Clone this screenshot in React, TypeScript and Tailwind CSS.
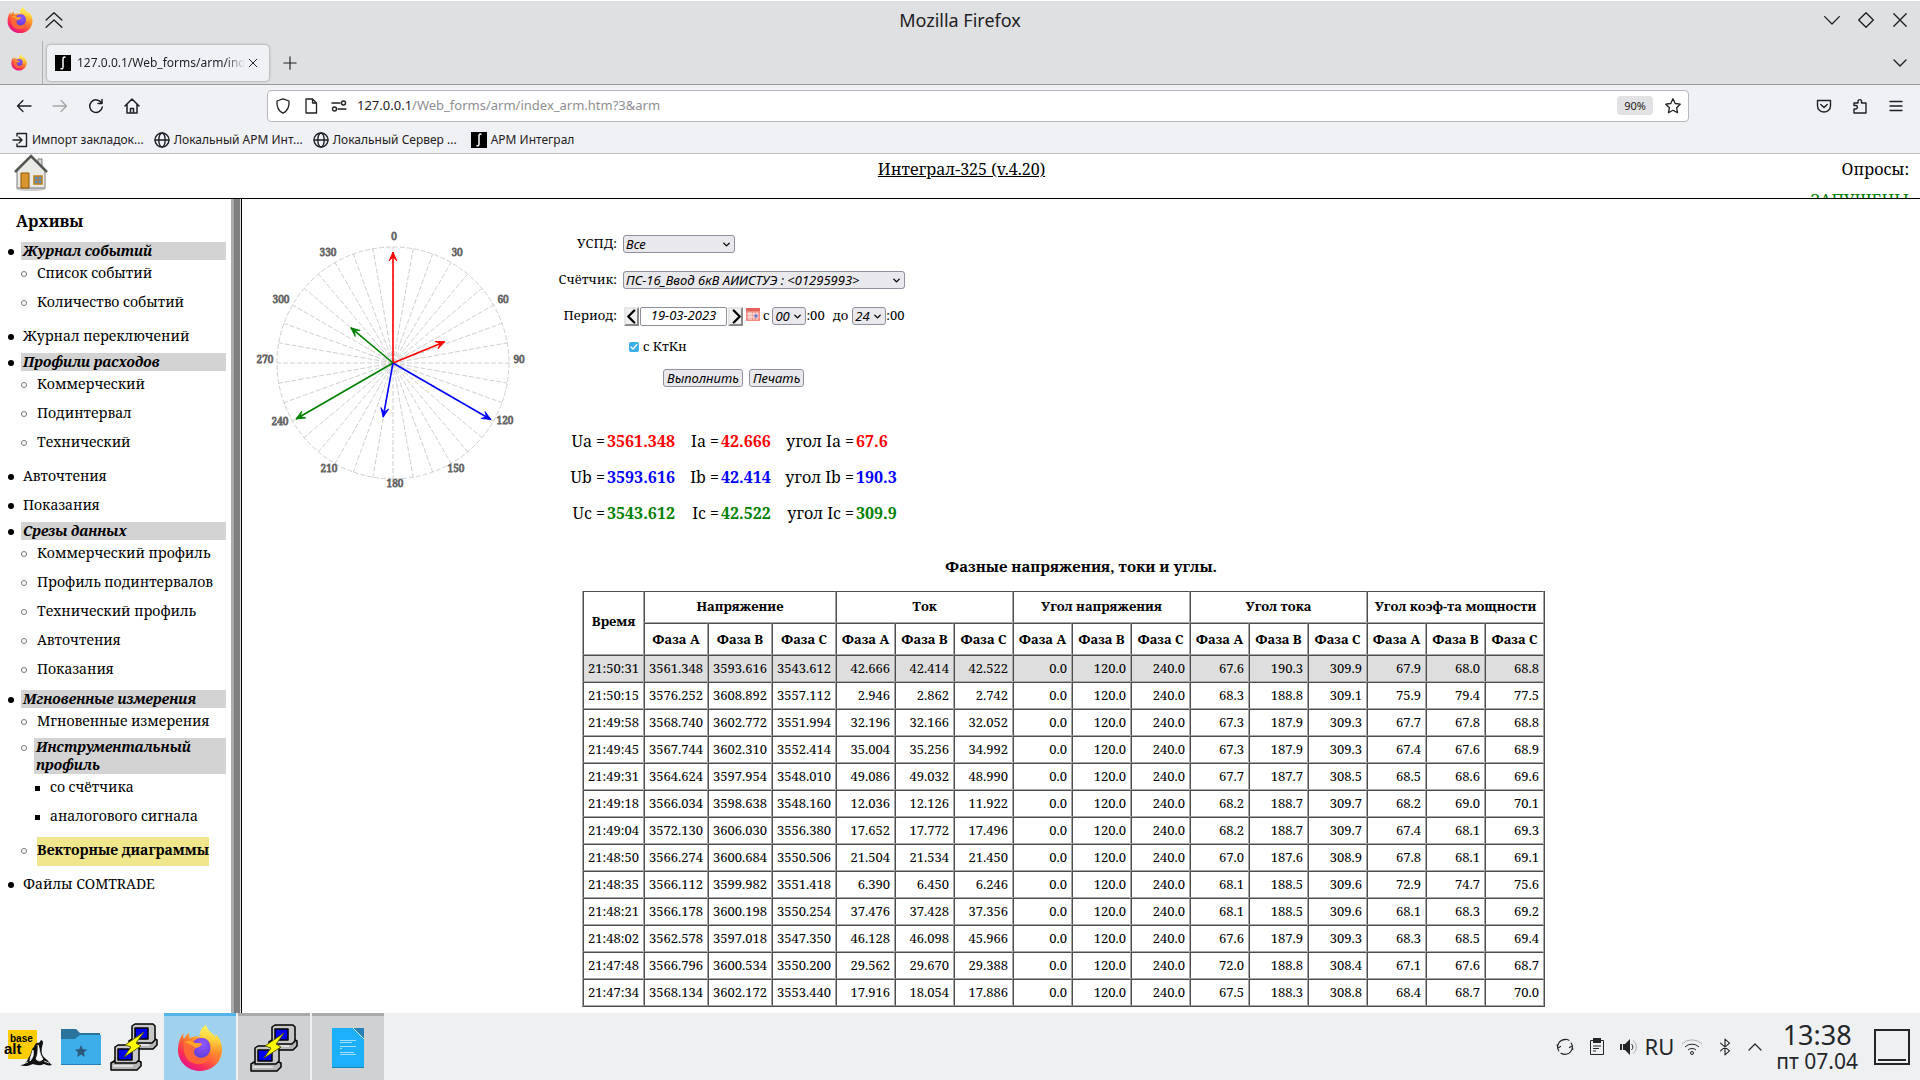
import type { ReactNode } from 'react'
import { ChevronDown, ChevronUp } from 'lucide-react'

type NavItem = { label: string; kind?: 'head' | 'active'; children?: NavItem[] }

const NAV: NavItem[] = [
  { label: 'Журнал событий', kind: 'head', children: [{ label: 'Список событий' }, { label: 'Количество событий' }] },
  { label: 'Журнал переключений' },
  {
    label: 'Профили расходов',
    kind: 'head',
    children: [{ label: 'Коммерческий' }, { label: 'Подинтервал' }, { label: 'Технический' }],
  },
  { label: 'Авточтения' },
  { label: 'Показания' },
  {
    label: 'Срезы данных',
    kind: 'head',
    children: [
      { label: 'Коммерческий профиль' },
      { label: 'Профиль подинтервалов' },
      { label: 'Технический профиль' },
      { label: 'Авточтения' },
      { label: 'Показания' },
    ],
  },
  {
    label: 'Мгновенные измерения',
    kind: 'head',
    children: [
      { label: 'Мгновенные измерения' },
      {
        label: 'Инструментальный профиль',
        kind: 'head',
        children: [{ label: 'со счётчика' }, { label: 'аналогового сигнала' }],
      },
      { label: 'Векторные диаграммы', kind: 'active' },
    ],
  },
  { label: 'Файлы COMTRADE' },
]

const GROUPS = ['Напряжение', 'Ток', 'Угол напряжения', 'Угол тока', 'Угол коэф-та мощности']
const PHASES = ['Фаза А', 'Фаза В', 'Фаза С']

const ROWS = [
  '21:50:31 3561.348 3593.616 3543.612 42.666 42.414 42.522 0.0 120.0 240.0 67.6 190.3 309.9 67.9 68.0 68.8',
  '21:50:15 3576.252 3608.892 3557.112 2.946 2.862 2.742 0.0 120.0 240.0 68.3 188.8 309.1 75.9 79.4 77.5',
  '21:49:58 3568.740 3602.772 3551.994 32.196 32.166 32.052 0.0 120.0 240.0 67.3 187.9 309.3 67.7 67.8 68.8',
  '21:49:45 3567.744 3602.310 3552.414 35.004 35.256 34.992 0.0 120.0 240.0 67.3 187.9 309.3 67.4 67.6 68.9',
  '21:49:31 3564.624 3597.954 3548.010 49.086 49.032 48.990 0.0 120.0 240.0 67.7 187.7 308.5 68.5 68.6 69.6',
  '21:49:18 3566.034 3598.638 3548.160 12.036 12.126 11.922 0.0 120.0 240.0 68.2 188.7 309.7 68.2 69.0 70.1',
  '21:49:04 3572.130 3606.030 3556.380 17.652 17.772 17.496 0.0 120.0 240.0 68.2 188.7 309.7 67.4 68.1 69.3',
  '21:48:50 3566.274 3600.684 3550.506 21.504 21.534 21.450 0.0 120.0 240.0 67.0 187.6 308.9 67.8 68.1 69.1',
  '21:48:35 3566.112 3599.982 3551.418 6.390 6.450 6.246 0.0 120.0 240.0 68.1 188.5 309.6 72.9 74.7 75.6',
  '21:48:21 3566.178 3600.198 3550.254 37.476 37.428 37.356 0.0 120.0 240.0 68.1 188.5 309.6 68.1 68.3 69.2',
  '21:48:02 3562.578 3597.018 3547.350 46.128 46.098 45.966 0.0 120.0 240.0 67.6 187.9 309.3 68.3 68.5 69.4',
  '21:47:48 3566.796 3600.534 3550.200 29.562 29.670 29.388 0.0 120.0 240.0 72.0 188.8 308.4 67.1 67.6 68.7',
  '21:47:34 3568.134 3602.172 3553.440 17.916 18.054 17.886 0.0 120.0 240.0 67.5 188.3 308.8 68.4 68.7 70.0',
].map(r => r.split(' '))

const VALUES = [
  { p: 'a', u: '3561.348', i: '42.666', angle: '67.6', color: 'text-[#ff0000]' },
  { p: 'b', u: '3593.616', i: '42.414', angle: '190.3', color: 'text-[#0000ff]' },
  { p: 'c', u: '3543.612', i: '42.522', angle: '309.9', color: 'text-[#008000]' },
]

const VECTORS = [
  { angle: 0, len: 111, color: '#ff0000' },
  { angle: 120, len: 113, color: '#0000ff' },
  { angle: 240, len: 112, color: '#008000' },
  { angle: 67.6, len: 56, color: '#ff0000' },
  { angle: 190.3, len: 55, color: '#0000ff' },
  { angle: 309.9, len: 55, color: '#008000' },
]

const DIAL = [
  { t: '0', x: 1, y: -123 },
  { t: '30', x: 64, y: -107 },
  { t: '60', x: 110, y: -60 },
  { t: '90', x: 126, y: 0 },
  { t: '120', x: 112, y: 61 },
  { t: '150', x: 63, y: 109 },
  { t: '180', x: 2, y: 124 },
  { t: '210', x: -64, y: 109 },
  { t: '240', x: -113, y: 62 },
  { t: '270', x: -128, y: 0 },
  { t: '300', x: -112, y: -60 },
  { t: '330', x: -65, y: -107 },
]

const SANS = "font-['Noto_Sans',sans-serif]"
const SERIF = "font-['Noto_Serif','DejaVu_Serif',serif]"

function Line({ className, children, w = 1.3 }: { className: string; children: ReactNode; w?: number }) {
  return (
    <svg viewBox="0 0 16 16" className={className} fill="none" stroke="currentColor" strokeWidth={w} strokeLinecap="round" strokeLinejoin="round" aria-hidden="true">
      {children}
    </svg>
  )
}

function Firefox({ className, id }: { className: string; id: string }) {
  return (
    <svg viewBox="0 0 46 48" className={className} aria-hidden="true">
      <defs>
        <linearGradient id={`${id}a`} x1="0.8" y1="0.1" x2="0.25" y2="0.95">
          <stop offset="0" stopColor="#fff44f" />
          <stop offset="0.3" stopColor="#ffb02e" />
          <stop offset="0.55" stopColor="#ff6a35" />
          <stop offset="0.8" stopColor="#fb2d5a" />
          <stop offset="1" stopColor="#e31587" />
        </linearGradient>
        <radialGradient id={`${id}b`} cx="0.6" cy="0.3" r="0.8">
          <stop offset="0" stopColor="#9059ff" />
          <stop offset="0.6" stopColor="#7542e5" />
          <stop offset="1" stopColor="#4a4ad0" />
        </radialGradient>
        <linearGradient id={`${id}c`} x1="0.5" y1="0" x2="0.5" y2="1">
          <stop offset="0" stopColor="#fff36b" />
          <stop offset="0.4" stopColor="#ffd43c" />
          <stop offset="0.75" stopColor="#ff8a2e" />
          <stop offset="1" stopColor="#ff4a4a" stopOpacity="0" />
        </linearGradient>
      </defs>
      <path d="M29 1c-5 3-7 8-6 12-5-1-8 0-10 1-1-1-1-3-1-5-3 2-4 4-5 6-1-1-1-3 0-6C3 13 1 19 1 26c0 12 10 21 22 21s22-9 22-21c0-8-4-14-7-16 1 2 1 3 1 4C36 9 30 7 29 1z" fill={`url(#${id}a)`} />
      <path d="M29 1c-5 3-7 8-6 12 8 1 13 6 13 13 0 6-4 11-9 12 9 1 18-4 18-12 0-8-4-14-7-16 1 2 1 3 1 4C36 9 30 7 29 1z" fill={`url(#${id}c)`} opacity="0.8" />
      <path d="M14 25c0-6 4-11 10-11 6-1 11 5 9 13-1 4-5 7-9 7-6 0-10-4-10-9z" fill={`url(#${id}b)`} />
      <path d="M7 18c4-2 9-1 11 1 3 0 6 0 7 1-1 3-5 3-7 5-2 3-1 8 6 9 5 0 8-3 9-6 2 7-5 13-12 12C11 40 5 31 7 18z" fill="#ff6a35" opacity="0.9" />
      <path d="M7 18c4-2 9-1 11 1 3 0 6 0 7 1-1 2-4 3-6 4-4-3-8-5-12-6z" fill="#ffa62b" />
    </svg>
  )
}

function Putty() {
  return (
    <svg viewBox="0 0 48 48" className="size-12" aria-hidden="true">
      <g stroke="#000" strokeWidth="1.5" strokeLinejoin="round">
        <path d="M19 18l5-3h19l4 2v5l-4 4H19z" fill="#b5b5b5" />
        <path d="M22 3l3-2h18l2 2v14l-3 3H22z" fill="#c8c8c8" />
        <path d="M1 40l5-3h20l5 2v4l-4 4H1z" fill="#b5b5b5" />
        <path d="M5 24l3-2h18l3 2v13l-3 3H5z" fill="#c8c8c8" />
        <path d="M25 5h13v11H25z" fill="#0000f0" />
        <path d="M8 26h14v11H8z" fill="#0000f0" />
      </g>
      <path d="M3 43h20M21 22h18" stroke="#eee" strokeWidth="1.5" />
      <path d="M34 9L15 22l6 2-7 10 17-11-5-3z" fill="#ffff00" stroke="#5c5c00" strokeWidth="1" />
    </svg>
  )
}

function Integral({ className }: { className: string }) {
  return (
    <svg viewBox="0 0 16 16" className={className} aria-hidden="true">
      <path d="M0 0h16v16H0z" fill="#000" />
      <path d="M10.500 2.500C8.500 1.500 8 2.500 8 4v8c0 1.500-.6 2.300-2.500 1.500" fill="none" stroke="#fff" strokeWidth="1.500" />
    </svg>
  )
}

function Globe() {
  return (
    <Line className="size-4 shrink-0" w={1.4}>
      <circle cx="8" cy="8" r="7" />
      <ellipse cx="8" cy="8" rx="3.200" ry="7" />
      <path d="M1 8h14" />
    </Line>
  )
}

function HouseLogo() {
  return (
    <svg viewBox="0 0 34 37" className="h-[37px] w-[34px]" aria-hidden="true">
      <ellipse cx="17" cy="35" rx="15" ry="2" fill="#ccc" />
      <path d="M24 5h4v9l-4-4z" fill="#ddd" stroke="#777" />
      <path d="M3 16L17 2l14 14v18H3z" fill="#e9e9e6" stroke="#7a7d78" />
      <path d="M1 18L17 2l16 16" fill="none" stroke="#555753" strokeWidth="2.500" />
      <path d="M7 19h8v15H7z" fill="#d9952f" stroke="#8f5902" />
      <path d="M20 22h8v8h-8z" fill="#5b8fd0" stroke="#c17d11" strokeWidth="1.500" />
      <path d="M24 22v8M20 26h8" stroke="#c17d11" />
    </svg>
  )
}

function TitleBar() {
  return (
    <header className="grid h-[41px] grid-cols-3 items-center border-t border-white px-[7px] pb-[3px]">
      <div className="flex items-center gap-3">
        <Firefox id="ft" className="h-7 w-[26px]" />
        <Line className="size-[18px]" w={1.2}><path d="M1 8l7-6.500L15 8M1 14.500L8 8l7 6.500" /></Line>
      </div>
      <h1 className="text-center text-[18px] leading-6">Mozilla Firefox</h1>
      <div className="flex justify-end gap-4 pr-1">
        <button aria-label="Свернуть"><Line className="size-[18px]" w={1.2}><path d="M1.500 5L8 11.500 14.500 5" /></Line></button>
        <button aria-label="Развернуть"><Line className="size-[18px]" w={1.2}><path d="M8 1.500L14.500 8 8 14.500 1.500 8z" /></Line></button>
        <button aria-label="Закрыть"><Line className="size-[18px]" w={1.2}><path d="M2.500 2.500l11 11M13.500 2.500l-11 11" /></Line></button>
      </div>
    </header>
  )
}

function TabStrip() {
  return (
    <div className="flex h-11 items-center border-b border-[#98989d]">
      <div className="flex h-full w-[43px] items-center justify-center border-r border-[#b0b0b4] pr-1">
        <Firefox id="fp" className="h-[17px] w-4" />
      </div>
      <div className="ml-1 flex h-9 w-[222px] items-center rounded bg-[#f0f1f4] pr-[10px] pl-2 shadow-[0_0_3px_rgba(0,0,0,0.4)]">
        <Integral className="size-4 shrink-0" />
        <span className="ml-[6px] flex-1 overflow-hidden text-[12px] whitespace-nowrap [mask-image:linear-gradient(to_right,black_88%,transparent)]">127.0.0.1/Web_forms/arm/index_arm</span>
        <button aria-label="Закрыть вкладку" className="ml-[2px]"><Line className="size-3"><path d="M3 3l10 10M13 3L3 13" /></Line></button>
      </div>
      <button aria-label="Новая вкладка" className="ml-[14px]"><Line className="size-[14px]"><path d="M8 1v14M1 8h14" /></Line></button>
      <button aria-label="Список вкладок" className="mr-3 ml-auto"><Line className="size-4" w={1.4}><path d="M2 5l6 6 6-6" /></Line></button>
    </div>
  )
}

function NavBar() {
  return (
    <div className="flex h-10 items-center px-4 pt-px">
      <nav className="flex w-[251px] shrink-0 items-center gap-5">
        <button aria-label="Назад"><Line className="size-4"><path d="M15 8H1.500M7 2.500L1.500 8 7 13.500" /></Line></button>
        <button aria-label="Вперёд" className="text-[#a5a5a8]"><Line className="size-4"><path d="M1 8h13.500M9 2.500L14.500 8 9 13.500" /></Line></button>
        <button aria-label="Обновить"><Line className="size-4" w={1.5}><path d="M13.500 5A6.300 6.300 0 1 0 14.300 9M14 1.500V5.500H10" /></Line></button>
        <button aria-label="Домой"><Line className="size-4" w={1.5}><path d="M1 8l7-7 7 7M3 6.500V15h10V6.500M6.500 15v-4.500h3V15" /></Line></button>
      </nav>
      <div className="flex h-8 min-w-0 flex-1 items-center rounded border border-[#b8b8bc] bg-white px-[7px]">
        <Line className="size-4 shrink-0"><path d="M8 .8L14 3c.5 6-1.500 10-6 12.200C3.500 13 1.500 9 2 3z" /></Line>
        <Line className="ml-3 size-4 shrink-0"><path d="M3 1h6.500L13.500 5v10H3zM9.500 1v4h4z" /></Line>
        <Line className="ml-3 size-4 shrink-0" w={1.4}>
          <path d="M1 5h8M7 11h8" />
          <circle cx="12.500" cy="5" r="2" />
          <circle cx="3.500" cy="11" r="2" />
        </Line>
        <div className="ml-[10px] flex-1 truncate text-[13px]">127.0.0.1<span className="text-[#8e8e92]">/Web_forms/arm/index_arm.htm?3&amp;arm</span></div>
        <button className="mr-3 h-[19px] rounded-sm bg-[#e2e2e4] px-[7px] text-[11px] leading-[19px]">90%</button>
        <button aria-label="Добавить в закладки"><Line className="size-4"><path d="M8 .8l2.200 4.700 5 .7-3.600 3.500.9 5L8 12.300l-4.500 2.400.9-5L.8 6.200l5-.7z" /></Line></button>
      </div>
      <div className="ml-[127px] flex shrink-0 gap-5">
        <button aria-label="Pocket"><Line className="size-4" w={1.4}><path d="M1.500 2.500h13V8a6.500 6 0 0 1-13 0zM4.800 6.500L8 9.500l3.200-3" /></Line></button>
        <button aria-label="Расширения"><Line className="size-4" w={1.4}><path d="M2 15v-4h2a1.800 1.800 0 0 0 0-3.500H2V5h4V3a1.800 1.800 0 0 1 3.500 0v2H14v10z" /></Line></button>
        <button aria-label="Меню"><Line className="size-4" w={1.4}><path d="M2 3.500h12M2 8h12M2 12.500h12" /></Line></button>
      </div>
    </div>
  )
}

function Bookmarks() {
  const link = 'flex items-center gap-1 whitespace-nowrap'
  return (
    <nav className="flex h-[29px] items-center gap-[10px] border-b border-[#c0c0c4] px-3 pt-px text-[12px]">
      <a href="#import" className={link}>
        <Line className="size-4 shrink-0" w={1.4}><path d="M5 4V1.500h9.500v13H5V12M1 8h8.500M7 5l3 3-3 3" /></Line>
        Импорт закладок...
      </a>
      <a href="#arm" className={link}><Globe />Локальный АРМ Инт...</a>
      <a href="#server" className={link}><Globe />Локальный Сервер ...</a>
      <a href="#integral" className={`ml-1 ${link}`}><Integral className="size-4 shrink-0" />АРМ Интеграл</a>
    </nav>
  )
}

const BULLETS = [
  'mr-[7px] ml-2 mt-[7px] size-[6px] rounded-full bg-black',
  'mr-[7px] ml-0 mt-[7px] size-[6px] rounded-full border border-[#777]',
  'mr-[8px] ml-0 mt-[8px] size-[5px] bg-black',
]

function NavList({ items, level }: { items: NavItem[]; level: number }) {
  return (
    <ul className={level === 0 ? '' : 'mb-[5px]'}>
      {items.map(it => (
        <li key={it.label}>
          <div className={it.kind === 'head' ? 'mt-px flex' : it.kind === 'active' ? 'flex' : 'flex pt-1 pb-[7px]'}>
            <span className={`${BULLETS[level]} shrink-0 ${it.kind === 'active' ? 'translate-y-1' : ''}`} />
            {it.kind === 'head' && <a href="#section" className="flex-1 bg-[#d3d3d3] pl-[2px] font-bold italic">{it.label}</a>}
            {it.kind === 'active' && <a href="#vectors" className="ml-[3px] bg-[#f0e68c] pt-1 pb-[7px] font-bold">{it.label}</a>}
            {!it.kind && <a href="#page" className={level === 1 ? 'pl-[3px]' : 'pl-[2px]'}>{it.label}</a>}
          </div>
          {it.children && <div className={level === 0 ? 'pl-[21px]' : 'pl-[14px]'}><NavList items={it.children} level={level + 1} /></div>}
        </li>
      ))}
    </ul>
  )
}

function Dial() {
  const pt = (a: number, r: number) => [Math.sin((a * Math.PI) / 180) * r, -Math.cos((a * Math.PI) / 180) * r]
  return (
    <svg viewBox="-150 -150 300 300" className="size-[300px] shrink-0" role="img" aria-label="Векторная диаграмма">
      <g stroke="#cfcfcf" strokeWidth="1" strokeDasharray="5 2" fill="none">
        <circle r="116" />
        {Array.from({ length: 36 }, (_, i) => {
          const [x, y] = pt(i * 10, 116)
          return <line key={i} x1="0" y1="0" x2={x} y2={y} />
        })}
      </g>
      <g fontSize="10" fill="#666" stroke="#666" strokeWidth="0.8" textAnchor="middle">
        {DIAL.map(d => <text key={d.t} x={d.x} y={d.y}>{d.t}</text>)}
      </g>
      {VECTORS.map(v => (
        <g key={`${v.angle}${v.len}`} transform={`rotate(${v.angle})`} stroke={v.color} fill="none">
          <path d={`M0 0V${-v.len}`} strokeWidth="1.6" />
          <path d={`M-4 ${-v.len + 9}L0 ${-v.len}L4 ${-v.len + 9}L0 ${-v.len + 5}z`} strokeWidth="0.8" fill={v.color} />
        </g>
      ))}
    </svg>
  )
}

function Select({ id, value, width, label }: { id: string; value: string; width: string; label?: string }) {
  return (
    <span className={`relative inline-flex ${width}`}>
      <select id={id} aria-label={label} defaultValue={value} className={`h-[18px] w-full appearance-none rounded-[3px] border border-[#8f8f9d] bg-[#e9e9ed] pl-[2px] text-[13px] leading-4 italic ${SANS}`}>
        <option>{value}</option>
      </select>
      <ChevronDown className="pointer-events-none absolute top-[4px] right-[3px] size-[11px]" strokeWidth={3} />
    </span>
  )
}

function FilterForm() {
  const label = 'w-[74px] text-right'
  const arrow = 'flex h-[19px] w-[15px] items-center justify-center border-2 border-[#e6e6e6] border-r-[#888] border-b-[#888] bg-[#f0f0f0]'
  const button = `h-[18px] rounded-[3px] border border-[#8f8f9d] bg-[#e9e9ed] px-[3px] text-[13px] leading-4 italic ${SANS}`
  return (
    <form className="flex flex-col text-[13px]" onSubmit={e => e.preventDefault()}>
      <div className="flex h-9 items-center gap-[6px]">
        <label htmlFor="uspd" className={label}>УСПД:</label>
        <Select id="uspd" value="Все" width="w-[112px]" />
      </div>
      <div className="flex h-9 items-center gap-[6px]">
        <label htmlFor="meter" className={label}>Счётчик:</label>
        <Select id="meter" value="ПС-16_Ввод 6кВ АИИСТУЭ : <01295993>" width="w-[282px]" />
      </div>
      <div className="flex h-9 items-center">
        <label htmlFor="date" className={label}>Период:</label>
        <button type="button" aria-label="Предыдущий день" className={`ml-[7px] ${arrow}`}><Line className="h-[15px] w-3 shrink-0" w={3}><path d="M11 0L3 8l8 8" /></Line></button>
        <input id="date" defaultValue="19-03-2023" className={`mx-px h-[19px] w-[87px] rounded-xs border border-[#8f8f9d] bg-white text-center text-[13px] italic ${SANS}`} />
        <button type="button" aria-label="Следующий день" className={arrow}><Line className="h-[15px] w-3 shrink-0" w={3}><path d="M5 0l8 8-8 8" /></Line></button>
        <svg viewBox="0 0 14 13" className="mx-[3px] mb-[3px] h-[13px] w-[14px]" aria-hidden="true">
          <path d="M0 0h14v13H0z" fill="#f08c84" />
          <path d="M0 0h14v3H0z" fill="#e2625a" />
          <path d="M3 4v8M5 4v8M8 4v8M11 4v8M1 6h12M1 9h12" stroke="#fff" strokeWidth=".8" />
          <path d="M8.500 6.500h3v3h-3z" fill="#5878d8" />
        </svg>
        с
        <span className="ml-[3px] flex"><Select id="from" label="Час начала" value="00" width="w-[34px]" /></span>
        :00
        <span className="ml-2">до</span>
        <span className="ml-1 flex"><Select id="to" label="Час конца" value="24" width="w-[34px]" /></span>
        :00
      </div>
      <label className="ml-[86px] flex h-[26px] items-center gap-1">
        <input type="checkbox" defaultChecked className="peer sr-only" />
        <span className="flex size-[10px] items-center justify-center rounded-xs bg-[#3daee9] text-white peer-focus:outline"><Line className="size-2" w={2.5}><path d="M2 8l4 4 8-9" /></Line></span>
        с КтКн
      </label>
      <div className="mt-[9px] ml-[120px] flex gap-[6px]">
        <button type="submit" className={button}>Выполнить</button>
        <button type="button" className={button}>Печать</button>
      </div>
    </form>
  )
}

function Readings() {
  return (
    <dl className="mt-9 text-base">
      {VALUES.map(v => (
        <div key={v.p} className="flex h-[36px] items-center gap-[2px] [&>dd]:font-bold [&>dt]:text-right [&>dt]:whitespace-nowrap">
          <dt className="w-[62px]">U{v.p} =</dt>
          <dd className={`w-[69px] ${v.color}`}>{v.u}</dd>
          <dt className="w-[41px]">I{v.p} =</dt>
          <dd className={`w-[51px] ${v.color}`}>{v.i}</dd>
          <dt className="w-[80px]">угол I{v.p} =</dt>
          <dd className={v.color}>{v.angle}</dd>
        </div>
      ))}
    </dl>
  )
}

function PhaseTable() {
  const cell = 'border border-t-[#4d4d4d] border-r-[#a6a6a6] border-b-[#a6a6a6] border-l-[#4d4d4d]'
  return (
    <table className="table-fixed border-separate border-spacing-0 border-r border-b border-l border-r-[#4d4d4d] border-b-[#4d4d4d] border-l-[#a6a6a6] text-[13px] leading-[17px]">
      <colgroup>
        <col className="w-[61px]" />
        <col span={3} className="w-[64px]" />
        <col span={12} className="w-[59px]" />
      </colgroup>
      <thead>
        <tr className="h-8">
          <th rowSpan={2} className={`pb-1 ${cell}`}>Время</th>
          {GROUPS.map(g => <th key={g} colSpan={3} className={`pb-[2px] whitespace-nowrap ${cell}`}>{g}</th>)}
        </tr>
        <tr className="h-8">
          {GROUPS.map(g => PHASES.map(p => <th key={g + p} className={`whitespace-nowrap ${cell}`}>{p}</th>))}
        </tr>
      </thead>
      <tbody>
        {ROWS.map((r, n) => (
          <tr key={r[0]} className={n === 0 ? 'h-[27px] bg-[#dedede]' : 'h-[27px]'}>
            {r.map((v, i) => <td key={i} className={`pr-1 text-right ${cell}`}>{v}</td>)}
          </tr>
        ))}
      </tbody>
    </table>
  )
}

function Taskbar() {
  return (
    <footer className={`flex h-[67px] shrink-0 items-stretch bg-[#eff0f2] text-[#232629] ${SANS}`}>
      <button aria-label="Меню приложений" className="ml-[4px]">
        <svg viewBox="0 0 48 40" className="h-10 w-12" aria-hidden="true">
          <path d="M4 3h29v29H4z" fill="#ffcc00" />
          <text x="6" y="15" fontSize="10" fontWeight="bold" fontFamily="Liberation Sans">base</text>
          <text x="0" y="27" fontSize="15" fontWeight="bold" fontFamily="Liberation Sans">alt</text>
          <path d="M16 38c4 0 5-2 7-4 1-3 3-5 4-8 1-3 1-5 3-6 1-4 3-5 5-4l2-3c3 1 2 4 1 7-1 6 0 9 4 12 3 2 3 4 6 6-3 1-6 0-8-1-4 2-8 1-11 0-4 2-9 3-13 1z" fill="#111" />
          <path d="M34 18c2 4 1 9 5 14-3 3-5 2-7 0 2-4 2-9 2-14zM29 23c1 4 0 8-3 11 0-4 2-7 3-11zM40 34l5 2M19 37l5-2" fill="#fff" stroke="#fff" strokeWidth="0.8" />
        </svg>
      </button>
      <button aria-label="Файлы" className="ml-[9px]">
        <svg viewBox="0 0 40 36" className="h-9 w-10" aria-hidden="true">
          <path d="M0 0h15l4 4h20v10H0z" fill="#2a739c" />
          <path d="M0 10h14l5-4h21v30H0z" fill="#3daee9" />
          <path d="M0 35h40v1H0z" fill="#2980b9" />
          <path d="M20 16l1.800 4.200 4.400.4-3.300 3 1 4.400-3.900-2.400-3.900 2.400 1-4.400-3.300-3 4.400-.4z" fill="#2c5a7c" />
        </svg>
      </button>
      <button aria-label="PuTTY" className="ml-[9px]"><Putty /></button>
      <div className="ml-[6px] flex gap-[2px]">
        <button aria-label="Firefox" className="flex w-[72px] items-center justify-center border-t-3 border-[#50b4ea] bg-[#a0d2ee]"><Firefox id="fb" className="h-12 w-[46px]" /></button>
        <button aria-label="Сеанс PuTTY" className="flex w-[72px] items-center justify-center border-t-3 border-[#a9a9a9] bg-[#d0d1d3]"><Putty /></button>
        <button aria-label="Документ" className="flex w-[72px] items-center justify-center border-t-3 border-[#a9a9a9] bg-[#d0d1d3]">
          <svg viewBox="0 0 32 40" className="h-10 w-8" aria-hidden="true">
            <path d="M0 0h21l11 11v29H0z" fill="#1cb0fa" />
            <path d="M21 0h11v11z" fill="#2980b9" />
            <path d="M21 0l11 11" stroke="#d5eefb" />
            <path d="M0 39.500h32" stroke="#1b80b8" />
            <path d="M8 12.500h16M8 14.500h12M8 18.500h16M8 20.500h2M8 24.500h14M8 26.500h16" stroke="#c8ebfc" strokeWidth="0.8" />
          </svg>
        </button>
      </div>
      <div className="ml-auto flex items-center">
        <Line className="size-[18px]" w={1}><path d="M2.500 11.500A6.500 6.500 0 0 1 8 1.500M13.500 4.500A6.500 6.500 0 0 1 8 14.500M5 2a6.500 6.500 0 0 1 6.500 0M4.500 13.500A6.500 6.500 0 0 0 8 14.500M1 6l.8 3L4 7.500M15 10l-.8-3L12 8.500" /></Line>
        <svg viewBox="0 0 16 18" className="ml-[15px] h-[18px] w-4" aria-hidden="true">
          <path d="M1.500 2.500h13v14h-13z" fill="none" stroke="currentColor" />
          <path d="M4 0h8v5H4z" fill="currentColor" />
          <path d="M4 8h8M4 10.500h6M4 13h3" stroke="currentColor" />
        </svg>
        <svg viewBox="0 0 18 18" className="ml-[15px] size-[18px]" aria-hidden="true">
          <path d="M0 6h2v6H0zM3 6h2l5-5v16l-5-5H3z" fill="currentColor" />
          <path d="M11.500 6a4 4 0 0 1 0 6" stroke="currentColor" fill="none" />
          <path d="M13 2.500a8 8 0 0 1 0 13" stroke="#aaa" fill="none" />
        </svg>
        <span className="ml-[7px] text-[22px]">RU</span>
        <svg viewBox="0 0 22 18" className="ml-[7px] h-[18px] w-[22px]" fill="none" stroke="currentColor" aria-hidden="true">
          <path d="M1 6a14 14 0 0 1 20 0" stroke="#b0b0b0" />
          <path d="M4 9a10 10 0 0 1 14 0M7 12a6 6 0 0 1 8 0" />
          <circle cx="11" cy="15" r="1.500" />
        </svg>
        <Line className="ml-[13px] size-[18px]" w={1}><path d="M4 4.500l8 7L8 15V1l4 3.500-8 7" /></Line>
        <ChevronUp className="ml-[9px] size-6" strokeWidth={1.2} />
        <div className="ml-[9px] flex flex-col items-center">
          <span className="text-[27px] leading-[28px]">13:38</span>
          <span className="text-[21px] leading-[24px]">пт 07.04</span>
        </div>
        <button aria-label="Показать рабочий стол" className="mr-[10px] ml-4 flex size-9 items-end border-2 border-[#232629] p-[2px]">
          <span className="h-[2px] w-full bg-[#232629]" />
        </button>
      </div>
    </footer>
  )
}

export default function App() {
  return (
    <div className="flex h-screen flex-col overflow-hidden bg-white text-black">
      <div className={`shrink-0 bg-[#dee0e2] text-[#1f2023] ${SANS}`}>
        <TitleBar />
        <TabStrip />
        <div className="bg-[#f0f1f4]">
          <NavBar />
          <Bookmarks />
        </div>
      </div>

      <div className={`grid h-[45px] shrink-0 grid-cols-3 overflow-hidden border-b border-black pr-[11px] pl-[14px] text-base leading-[31px] ${SERIF}`}>
        <a href="#home" aria-label="Главная" className="w-fit"><HouseLogo /></a>
        <a href="#about" className="text-center underline">Интеграл-325 (v.4.20)</a>
        <div className="text-right">
          <div>Опросы:</div>
          <div className="text-[#008000]">ЗАПУЩЕНЫ</div>
        </div>
      </div>

      <div className={`flex min-h-0 flex-1 ${SERIF}`}>
        <aside className="w-[231px] shrink-0 overflow-hidden pr-[5px] text-[14px] leading-[18px]">
          <h2 className="mt-3 mb-[11px] ml-4 text-base leading-5 font-bold">Архивы</h2>
          <NavList items={NAV} level={0} />
        </aside>
        <div className="flex shrink-0">
          <span className="w-[3px] bg-[#ababab]" />
          <span className="w-px bg-[#777]" />
          <span className="w-[5px] bg-[#808080]" />
          <span className="w-px bg-[#ddd]" />
          <span className="w-px bg-black" />
        </div>
        <main className="min-w-0 flex-1 overflow-hidden">
          <div className="flex">
            <div className="pt-[14px] pl-px"><Dial /></div>
            <div className="pt-[27px]">
              <FilterForm />
              <Readings />
            </div>
          </div>
          <h3 className="mt-[25px] mb-[15px] text-center text-[15px] leading-5 font-bold">Фазные напряжения, токи и углы.</h3>
          <div className="flex justify-center pr-[35px]">
            <PhaseTable />
          </div>
        </main>
      </div>

      <Taskbar />
    </div>
  )
}
